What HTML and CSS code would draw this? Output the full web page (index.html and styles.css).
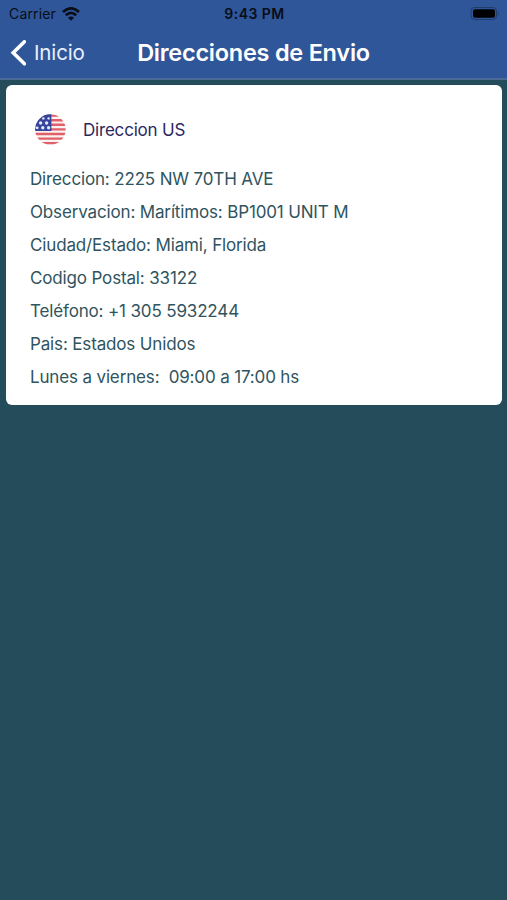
FILE: index.html
```html
<!DOCTYPE html>
<html lang="es">
<head>
    <meta charset="UTF-8">
    <meta name="viewport" content="width=device-width, initial-scale=1.0">
    <title>Direcciones de Envio</title>
    <link rel="stylesheet" href="styles.css">
</head>
<body>
    <header class="header">
        <div class="status-bar">
            <div class="carrier">
                <span>Carrier</span>
                <svg class="wifi" viewBox="0 0 18 14">
                    <path d="M1 5 Q9 -2.2 17 5" />
                    <path d="M3.8 8.2 Q9 3.5 14.2 8.2" />
                    <path class="dot" d="M6 10.8 Q9 8 12 10.8 L9 13.8 Z" />
                </svg>
            </div>
            <div class="time">9:43 PM</div>
            <svg class="battery" viewBox="0 0 30 14">
                <rect class="battery-case" x="1" y="0.5" width="25.5" height="12" rx="3.5" />
                <rect x="3" y="2.2" width="22" height="8.6" rx="2" />
                <path class="battery-tip" d="M27.8 4.5 Q29.4 6.5 27.8 8.5 Z" />
            </svg>
        </div>
        <nav class="nav-bar">
            <a class="back" href="#">
                <svg class="chevron" viewBox="0 0 16 26">
                    <path d="M14.4 1.8 L3.2 12.8 L14.4 23.8" />
                </svg>
                <span>Inicio</span>
            </a>
            <h1>Direcciones de Envio</h1>
        </nav>
    </header>

    <main class="card">
        <div class="card-title">
            <svg class="flag" viewBox="0 0 32 32">
                <defs>
                    <clipPath id="circle"><circle cx="16.4" cy="15.4" r="15.2" /></clipPath>
                </defs>
                <g clip-path="url(#circle)">
                    <rect width="32" height="32" fill="#fbf1f2" />
                    <path d="M0 1.6H32M0 6.2H32M0 10.8H32M0 15.4H32M0 20H32M0 24.6H32M0 29.2H32" stroke="#e0606a" stroke-width="2.4" />
                    <rect width="17.4" height="17" fill="#35459b" />
                    <g fill="#e4e9f8">
                        <circle cx="9.4" cy="4.4" r="1.2" />
                        <circle cx="14.6" cy="4.4" r="1.2" />
                        <circle cx="6.6" cy="9" r="1.7" />
                        <circle cx="12.6" cy="9" r="1.7" />
                        <circle cx="3.2" cy="13.8" r="1.4" />
                        <circle cx="8.8" cy="13.8" r="1.7" />
                        <circle cx="14.6" cy="13.8" r="1.7" />
                    </g>
                </g>
            </svg>
            <h2>Direccion US</h2>
        </div>
        <ul class="details">
            <li>Direccion: 2225 NW 70TH AVE</li>
            <li>Observacion: Marítimos: BP1001 UNIT M</li>
            <li>Ciudad/Estado: Miami, Florida</li>
            <li>Codigo Postal: 33122</li>
            <li>Teléfono: +1 305 5932244</li>
            <li>Pais: Estados Unidos</li>
            <li>Lunes a viernes:&nbsp; 09:00 a 17:00 hs</li>
        </ul>
    </main>
</body>
</html>
```
FILE: styles.css
```css
:root {
    --header-color: #2f5698;
    --background-color: #254c5b;
    --text-color: #2f5460;
    --title-color: #2c2860;
}

* {
    margin: 0;
    padding: 0;
    box-sizing: border-box;
    font-family: Inter, 'Liberation Sans', sans-serif;
}

body {
    background-color: var(--background-color);
    min-height: 100vh;
}

.header {
    height: 80px;
    background-color: var(--header-color);
    border-bottom: 2px solid #4c6b94;
}

.status-bar {
    height: 27px;
    display: grid;
    grid-template-columns: 1fr auto 1fr;
    align-items: center;
    padding: 0 7px 0 9px;
    font-size: 14px;
    color: #080d18;
}

.carrier {
    display: flex;
    align-items: center;
    gap: 6px;
    letter-spacing: 0.15px;
}

.wifi {
    width: 18px;
    height: 14px;
    fill: none;
    stroke: #080d18;
    stroke-width: 2.8;
}

.wifi .dot {
    fill: #080d18;
    stroke: none;
}

.time {
    font-weight: 600;
    letter-spacing: 0.45px;
}

.battery {
    width: 30px;
    height: 14px;
    justify-self: end;
    fill: #000;
}

.battery .battery-case {
    fill: none;
    stroke: #203c6c;
}

.battery .battery-tip {
    fill: #203c6c;
}

.nav-bar {
    height: 51px;
    display: grid;
    grid-template-columns: 1fr auto 1fr;
    align-items: center;
    padding: 0 10px;
    color: #fff;
}

.back {
    display: flex;
    align-items: center;
    gap: 8px;
    color: #e8f0ff;
    font-size: 20.5px;
    letter-spacing: -0.15px;
    text-decoration: none;
}

.chevron {
    width: 16px;
    height: 26px;
    fill: none;
    stroke: #fff;
    stroke-width: 3.6;
    stroke-linecap: round;
}

h1 {
    font-size: 23.5px;
    font-weight: 600;
    letter-spacing: -0.25px;
}

.card {
    height: 320px;
    margin: 5px 5px 0 6px;
    padding: 28px 24px 0;
    background-color: #fff;
    border-radius: 6px;
}

.card-title {
    display: flex;
    align-items: center;
    gap: 17px;
    height: 33px;
    padding-left: 4px;
}

.flag {
    width: 32px;
    height: 32px;
}

h2 {
    font-size: 17px;
    font-weight: 400;
    letter-spacing: -0.2px;
    color: var(--title-color);
}

.details {
    margin-top: 17px;
    list-style: none;
    font-size: 17px;
    line-height: 33px;
    letter-spacing: -0.15px;
    color: var(--text-color);
}
```
